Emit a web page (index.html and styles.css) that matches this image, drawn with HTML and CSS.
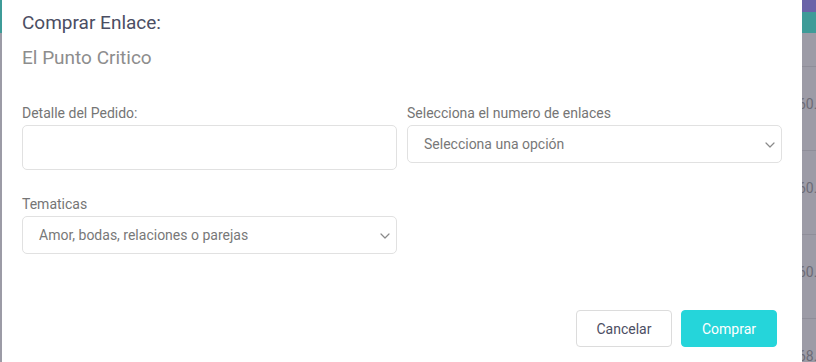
FILE: index.html
```html
<!DOCTYPE html>
<html lang="es">
<head>
<meta charset="utf-8">
<title>Comprar Enlace</title>
<link rel="stylesheet" href="styles.css">
</head>
<body>
<div class="page">
  <div class="bg-left"></div>
  <div class="modal">
    <h2 class="modal-title">Comprar Enlace:</h2>
    <p class="modal-subtitle">El Punto Critico</p>
    <div class="form-grid">
      <div class="field">
        <label class="field-label">Detalle del Pedido:</label>
        <textarea class="field-textarea"></textarea>
      </div>
      <div class="field">
        <label class="field-label">Selecciona el numero de enlaces</label>
        <div class="select">
          <span class="select-text">Selecciona una opción</span>
          <svg class="chevron" width="10" height="6" viewBox="0 0 10 6"><path d="M1 1l4 4 4-4" fill="none" stroke="#8a8a8a" stroke-width="1.2" stroke-linecap="round" stroke-linejoin="round"/></svg>
        </div>
      </div>
      <div class="field">
        <label class="field-label">Tematicas</label>
        <div class="select">
          <span class="select-text">Amor, bodas, relaciones o parejas</span>
          <svg class="chevron" width="10" height="6" viewBox="0 0 10 6"><path d="M1 1l4 4 4-4" fill="none" stroke="#8a8a8a" stroke-width="1.2" stroke-linecap="round" stroke-linejoin="round"/></svg>
        </div>
      </div>
    </div>
    <div class="actions">
      <button class="btn btn-cancel">Cancelar</button>
      <button class="btn btn-buy">Comprar</button>
    </div>
  </div>
  <div class="bg-right">
    <div class="bg-purple"></div>
    <div class="bg-teal"></div>
    <div class="bg-head"></div>
    <div class="bg-row"><span>60.</span></div>
    <div class="bg-row"><span>60.</span></div>
    <div class="bg-row"><span>60.</span></div>
    <div class="bg-row"><span>68.</span></div>
  </div>
</div>
</body>
</html>
```

FILE: styles.css
```css
* { box-sizing: border-box; }
html, body { margin: 0; padding: 0; }
body {
  font-family: Roboto, "Liberation Sans", sans-serif;
  background: #9c9ba6;
  overflow: hidden;
}
.page {
  display: flex;
  width: 816px;
  height: 362px;
  overflow: hidden;
}
.bg-left {
  width: 2px;
  flex: none;
  background: linear-gradient(to bottom, #3e9b98 0, #3e9b98 33px, #9c9ba6 33px);
}
.modal {
  width: 800px;
  flex: none;
  background: #fff;
  padding: 12px 20px 0;
}
.modal-title {
  margin: 0;
  font-size: 19px;
  line-height: 22px;
  font-weight: 400;
  color: #4b4e63;
}
.modal-subtitle {
  margin: 13px 0 0;
  font-size: 19px;
  line-height: 22px;
  color: #8d8d8d;
}
.form-grid {
  margin-top: 34px;
  display: grid;
  grid-template-columns: 375px 375px;
  column-gap: 10px;
  row-gap: 24px;
  align-items: start;
}
.field { display: flex; flex-direction: column; }
.field-label {
  font-size: 14px;
  line-height: 20px;
  color: #757575;
  margin-bottom: 2px;
}
.field-textarea {
  height: 45px;
  border: 1px solid #e1e1e1;
  border-radius: 5px;
  resize: none;
  padding: 6px 12px;
  font-family: inherit;
  background: #fff;
}
.select {
  height: 38px;
  border: 1px solid #e1e1e1;
  border-radius: 5px;
  display: flex;
  align-items: center;
  justify-content: space-between;
  padding: 0 6px 0 16px;
}
.select-text {
  font-size: 14px;
  color: #787878;
}
.chevron { flex: none; margin-top: 1px; }
.actions {
  display: flex;
  justify-content: flex-end;
  gap: 9px;
  margin-top: 56px;
  padding-right: 5px;
}
.btn {
  width: 96px;
  height: 37px;
  border-radius: 4px;
  font-family: inherit;
  font-size: 14px;
  cursor: pointer;
}
.btn-cancel {
  background: #fff;
  border: 1px solid #dcdcdc;
  color: #4b4e63;
}
.btn-buy {
  background: #25d5da;
  border: 1px solid #25d5da;
  color: #fff;
}
.bg-right {
  width: 14px;
  flex: none;
  overflow: hidden;
  background: #9c9ba6;
}
.bg-purple { height: 12px; background: #6a63a8; }
.bg-teal { height: 21px; background: #3e9b98; }
.bg-head { height: 34px; border-bottom: 1px solid #8f8e99; }
.bg-row {
  height: 84px;
  border-bottom: 1px solid #8f8e99;
  padding-top: 27px;
  white-space: nowrap;
}
.bg-row span {
  display: block;
  margin-left: -4px;
  font-size: 14px;
  line-height: 20px;
  color: #6c6b76;
}
```
